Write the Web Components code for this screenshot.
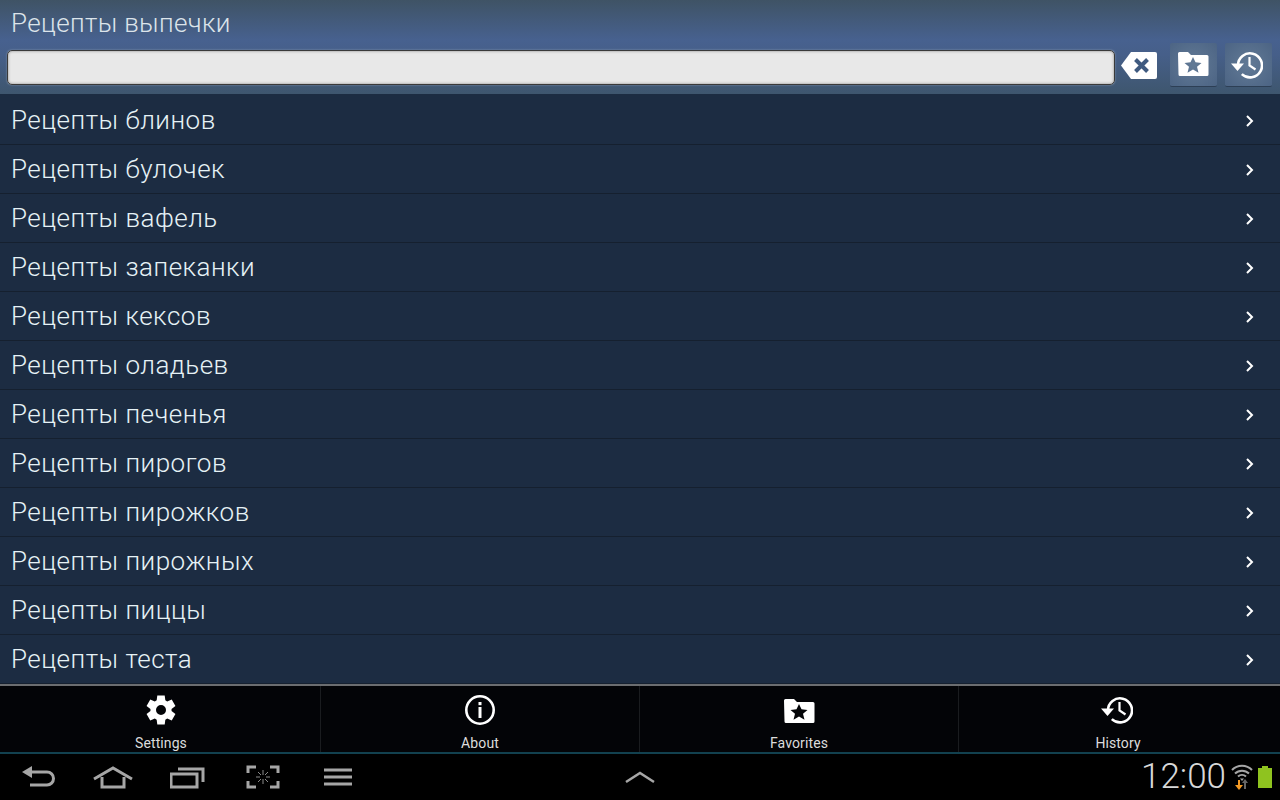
<!DOCTYPE html>
<html lang="ru">
<head>
<meta charset="utf-8">
<title>Рецепты выпечки</title>
<style>
html, body { margin: 0; height: 100%; background: #000; overflow: hidden; }
body { display: flex; flex-direction: column; width: 1280px; height: 800px; font-family: Roboto, "Liberation Sans", sans-serif; }
</style>
</head>
<body>
<recipe-header title="Рецепты выпечки"></recipe-header>
<recipe-list>
  <recipe-row>Рецепты блинов</recipe-row>
  <recipe-row>Рецепты булочек</recipe-row>
  <recipe-row>Рецепты вафель</recipe-row>
  <recipe-row>Рецепты запеканки</recipe-row>
  <recipe-row>Рецепты кексов</recipe-row>
  <recipe-row>Рецепты оладьев</recipe-row>
  <recipe-row>Рецепты печенья</recipe-row>
  <recipe-row>Рецепты пирогов</recipe-row>
  <recipe-row>Рецепты пирожков</recipe-row>
  <recipe-row>Рецепты пирожных</recipe-row>
  <recipe-row>Рецепты пиццы</recipe-row>
  <recipe-row>Рецепты теста</recipe-row>
</recipe-list>
<tab-bar>
  <tab-item icon="settings">Settings</tab-item>
  <tab-item icon="about">About</tab-item>
  <tab-item icon="favorites">Favorites</tab-item>
  <tab-item icon="history">History</tab-item>
</tab-bar>
<system-bar></system-bar>

<script>
// six-tooth gear, teeth pointing up and down
function gearPath() {
    let d = '';
    for (let i = 0; i < 6; i++) {
        const a = i * Math.PI / 3 - Math.PI / 2;
        [[-0.42, 10.6], [-0.25, 15], [0.25, 15], [0.42, 10.6]].forEach(([da, r], j) => {
            const x = 16 + r * Math.cos(a + da);
            const y = 16 + r * Math.sin(a + da);
            d += (i === 0 && j === 0 ? 'M' : 'L') + x.toFixed(2) + ' ' + y.toFixed(2);
        });
    }
    return d + 'zM16 11a5 5 0 1 0 0 10a5 5 0 0 0 0-10z';
}

// shared icon paths
const ICONS = {
    settings: `<path fill="#fff" fill-rule="evenodd" d="${gearPath()}"/>`,
    about: `<circle cx="16" cy="16" r="13.700" fill="none" stroke="#fff" stroke-width="2.600"/><rect x="14.500" y="8" width="3" height="3.200" fill="#fff"/><rect x="14.500" y="13" width="3" height="11" fill="#fff"/>`,
    favorites: `<path fill="#fff" fill-rule="evenodd" d="M1 6.500a1.500 1.500 0 0 1 1.500-1.500h8.500l3 3h16a1.500 1.500 0 0 1 1.500 1.500v18a1.500 1.500 0 0 1-1.500 1.500h-27a1.500 1.500 0 0 1-1.500-1.500zM16 10l2.500 5.300 6 .6-4.500 3.900 1.500 5.900L16 22.600l-5.500 3.100 1.500-5.900L7.500 15.900l6-.6z"/>`,
    history: `<path fill="none" stroke="#fff" stroke-width="2.600" d="M7 16.500a12 12 0 1 1 3.800 8.600"/><path fill="#fff" d="M0 14.500h13l-6.500 7.500z"/><path fill="none" stroke="#fff" stroke-width="2.200" d="M18.500 8v8.500l6 4"/>`
};

class RecipeHeader extends HTMLElement {
    constructor() {
        super();
        this.attachShadow({ mode: 'open' });
    }

    connectedCallback() {
        const title = this.getAttribute('title') || '';
        this.removeAttribute('title');
        this.shadowRoot.innerHTML = `
        <style>
            :host {
                display: block;
                flex: none;
                height: 94px;
                box-sizing: border-box;
                padding: 0 8px 0 7px;
                background: linear-gradient(#3f5365 0, #47618f 40px, #465f89 55px, #3e566e 94px);
            }
            h1 {
                margin: 0;
                padding: 8px 0 0 4px;
                height: 42px;
                box-sizing: border-box;
                font: 300 26px/31px Roboto, sans-serif;
                color: #dce4ea;
                letter-spacing: .35px;
                white-space: nowrap;
            }
            .bar { display: flex; align-items: center; height: 46px; }
            .field {
                flex: none;
                width: 1108px;
                height: 35px;
                margin-top: 5px;
                box-sizing: border-box;
                border: 1.500px solid #3a3a3a;
                border-radius: 5px;
                background: #e8e8e8;
                box-shadow: inset 0 0 3px #888, 0 0 2px #8fa0b8;
            }
            .clear { flex: none; margin-left: 6px; width: 36px; height: 27px; }
            .btn {
                flex: none;
                width: 47px;
                height: 44px;
                margin-left: 8px;
                display: flex;
                align-items: center;
                justify-content: center;
                box-sizing: border-box;
                background: radial-gradient(circle, #627a96 0, #4c6484 100%);
                border-bottom: 1.500px solid #2d3f55;
                border-radius: 2px;
            }
            .clear + .btn { margin-left: 13px; }
            .btn svg { width: 32px; height: 32px; margin: -3px 2px 0 0; }
            .btn + .btn svg { margin: 0 4px 0 0; }
        </style>
        <h1>${title}</h1>
        <div class="bar">
            <div class="field"></div>
            <svg class="clear" viewBox="0 0 36 27">
                <path fill="#fff" d="M10 0h24a2 2 0 0 1 2 2v23a2 2 0 0 1-2 2H10L0 13.500z"/>
                <path fill="none" stroke="#3f5a80" stroke-width="4" d="M14.500 7.500l12 12M26.500 7.500l-12 12"/>
            </svg>
            <div class="btn"><svg viewBox="0 0 32 32">${ICONS.favorites}</svg></div>
            <div class="btn"><svg viewBox="0 0 32 32">${ICONS.history}</svg></div>
        </div>`;
    }
}

class RecipeList extends HTMLElement {
    constructor() {
        super();
        this.attachShadow({ mode: 'open' });
        this.shadowRoot.innerHTML = `
        <style>
            :host { display: block; flex: none; height: 590px; box-sizing: border-box; padding-top: 2px; background: #1c2c42; overflow: hidden; }
        </style>
        <slot></slot>`;
    }
}

class RecipeRow extends HTMLElement {
    constructor() {
        super();
        this.attachShadow({ mode: 'open' });
        this.shadowRoot.innerHTML = `
        <style>
            :host {
                display: flex;
                align-items: center;
                justify-content: space-between;
                height: 49px;
                box-sizing: border-box;
                padding: 0 26px 0 11px;
                border-bottom: 1px solid #15202f;
                font: 300 26px/31px Roboto, sans-serif;
                letter-spacing: .5px;
                color: #e6f2f6;
            }
            svg { width: 9px; height: 14px; margin-top: 2px; }
        </style>
        <span><slot></slot></span>
        <svg viewBox="0 0 9 14"><path fill="none" stroke="#fff" stroke-width="2" d="M2 2l5 5-5 5"/></svg>`;
    }
}

class TabBar extends HTMLElement {
    constructor() {
        super();
        this.attachShadow({ mode: 'open' });
        this.shadowRoot.innerHTML = `
        <style>
            :host {
                display: grid;
                grid-template-columns: repeat(4, 319px);
                flex: none;
                height: 70px;
                box-sizing: border-box;
                padding-left: 1px;
                background: #030407;
                border-top: 2px solid #6b6d70;
                border-bottom: 2px solid #12414f;
            }
        </style>
        <slot></slot>`;
    }
}

class TabItem extends HTMLElement {
    constructor() {
        super();
        this.attachShadow({ mode: 'open' });
    }

    connectedCallback() {
        const icon = ICONS[this.getAttribute('icon')] || '';
        this.shadowRoot.innerHTML = `
        <style>
            :host {
                display: flex;
                flex-direction: column;
                align-items: center;
                box-sizing: border-box;
                padding-top: 8px;
                border-left: 1px solid #1a1c1f;
                font: 400 14px/16px Roboto, sans-serif;
                letter-spacing: .1px;
                color: #dcdcdc;
            }
            :host(:first-child) { border-left-color: transparent; }
            svg { width: 32px; height: 32px; margin-bottom: 9px; }
            :host([icon="history"]) svg { transform: translateX(-1px); }
        </style>
        <svg viewBox="0 0 32 32">${icon}</svg>
        <span><slot></slot></span>`;
    }
}

class SystemBar extends HTMLElement {
    constructor() {
        super();
        this.attachShadow({ mode: 'open' });
        this.shadowRoot.innerHTML = `
        <style>
            :host {
                display: grid;
                grid-template-columns: 1fr auto 1fr;
                align-items: center;
                flex: none;
                height: 46px;
                background: #000;
                color: #a6a6a6;
            }
            .nav { display: flex; align-items: center; gap: 37px; padding-left: 22px; }
            .shot { margin-left: 4px; }
            .menu { margin-left: 7px; }
            .right { display: flex; align-items: center; justify-content: flex-end; padding-right: 8px; gap: 5px; }
            .clock { font: 300 35px/40px Roboto, sans-serif; color: #d8d8d8; }
            svg { display: block; }
        </style>
        <div class="nav">
            <svg width="34" height="24" viewBox="0 0 34 24"><path fill="none" stroke="#a6a6a6" stroke-width="3" d="M4 7h21a6.500 6.500 0 0 1 0 13H8"/><path fill="#a6a6a6" d="M0 7l10-6v12z"/></svg>
            <svg width="40" height="24" viewBox="0 0 40 24"><path fill="none" stroke="#a6a6a6" stroke-width="3" d="M1 14L20 3l19 11M9 12v10h22V12"/></svg>
            <svg width="35" height="24" viewBox="0 0 35 24"><path fill="none" stroke="#a6a6a6" stroke-width="3" d="M1 9h26v13H1zM8 4h25v13"/></svg>
            <svg class="shot" width="34" height="24" viewBox="0 0 34 24"><path fill="none" stroke="#a6a6a6" stroke-width="3" d="M10 2H2v6M24 2h8v6M10 22H2v-6M24 22h8v-6"/><path stroke="#8a8a8a" stroke-width="1" d="M17 5v5M17 14v5M10 12h4M20 12h4M12 7l3 3M22 7l-3 3M12 17l3-3M22 17l-3-3"/></svg>
            <svg class="menu" width="28" height="18" viewBox="0 0 28 18"><path stroke="#a6a6a6" stroke-width="3" d="M0 2h28M0 9h28M0 16h28"/></svg>
        </div>
        <svg width="30" height="14" viewBox="0 0 30 14"><path fill="none" stroke="#a6a6a6" stroke-width="2.500" d="M1 12L15 3l14 9"/></svg>
        <div class="right">
            <span class="clock">12:00</span>
            <svg width="22" height="26" viewBox="0 0 22 26">
                <path fill="none" stroke="#a6a6a6" stroke-width="2" d="M1 6a14 14 0 0 1 20 0M4 9.500a10 10 0 0 1 14 0M7 12.500a6 6 0 0 1 8 0"/>
                <path fill="#a6a6a6" d="M9 14.500h4L11 17z"/>
                <path stroke="#f59a23" stroke-width="2" d="M8 16v7"/><path fill="#f59a23" d="M4 21h8l-4 5z"/>
                <path stroke="#666" stroke-width="2" d="M14 18v7"/><path fill="#666" d="M11 19h6l-3-4z"/>
            </svg>
            <svg width="14" height="22" viewBox="0 0 14 22"><path fill="#8fc31f" d="M4 0h6v2h4v20H0V2h4z"/></svg>
        </div>`;
    }
}

customElements.define('recipe-header', RecipeHeader);
customElements.define('recipe-list', RecipeList);
customElements.define('recipe-row', RecipeRow);
customElements.define('tab-bar', TabBar);
customElements.define('tab-item', TabItem);
customElements.define('system-bar', SystemBar);
</script>
</body>
</html>
